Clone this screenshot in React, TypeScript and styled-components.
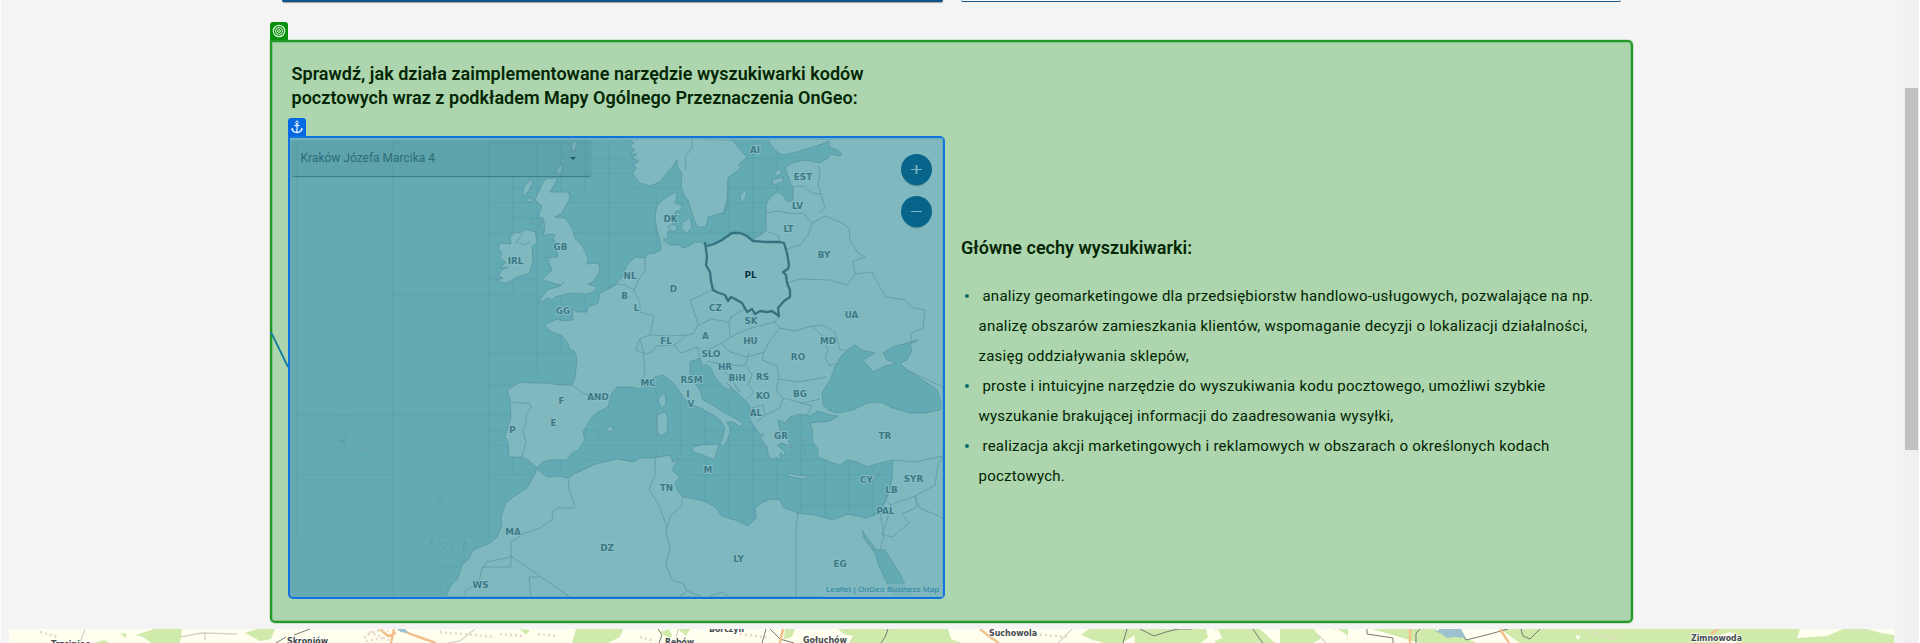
import React from 'react';
import styled, { createGlobalStyle } from 'styled-components';

const GlobalStyle = createGlobalStyle`
  * { box-sizing: border-box; }
  body { margin: 0; background: #f4f4f4; font-family: Roboto, "Liberation Sans", sans-serif; overflow: hidden; }
`;

const Page = styled.div`
  display: flex;
  height: 643px;
  border-left: 1px solid #fff;
  border-right: 1px solid #fff;
`;

const Content = styled.main`
  flex: 1;
  display: flex;
  flex-direction: column;
  min-width: 0;
`;

const ScrollTrack = styled.div`
  width: 16px;
  padding: 88px 1px 0 2px;
  background: #f0f0f0;
`;

const ScrollThumb = styled.div`
  height: 362px;
  background: #c1c1c1;
`;

const ButtonEdges = styled.div`
  display: flex;
  gap: 18px;
  padding-left: 281px;
  height: 40px;
`;

const ButtonEdge = styled.div<{ $outlined?: boolean }>`
  width: ${p => (p.$outlined ? 660 : 661)}px;
  height: 2px;
  border-radius: 0 0 3px 3px;
  background: ${p => (p.$outlined ? '#f8fafb' : '#0f548b')};
  border-bottom: 1px solid #0f548b;
  box-shadow: ${p => (p.$outlined ? 'none' : '0 1px 1px rgba(0, 0, 0, 0.35)')};
`;

const Card = styled.section`
  position: relative;
  display: flex;
  gap: 16px;
  width: 1363px;
  height: 583px;
  margin-left: 269px;
  padding: 20px 16px 0;
  background: #add6ae;
  border: 2px solid #219a27;
  border-radius: 0 5px 5px 5px;
  box-shadow: 0 0 0 1px rgba(33, 154, 39, 0.18), inset 0 0 0 1px rgba(33, 130, 39, 0.25);
`;

const Badge = styled.div<{ $color: string }>`
  position: absolute;
  left: -2px;
  top: -20px;
  width: 18px;
  height: 18px;
  display: flex;
  align-items: center;
  justify-content: center;
  border-radius: 3px 3px 0 0;
  background: ${p => p.$color};
`;

const Connector = styled.svg`
  position: absolute;
  left: -2px;
  top: 290px;
`;

const DemoColumn = styled.div`
  width: 657px;
`;

const Heading = styled.h3`
  margin: 0;
  font-size: 18px;
  line-height: 24px;
  font-weight: 600;
  letter-spacing: 0.02px;
  color: #042604;
`;

const DemoHeading = styled(Heading)`
  padding-left: 3.5px;
  height: 74px;
  white-space: nowrap;
`;

const MapFrame = styled.div`
  position: relative;
  height: 463px;
  border: 2px solid #1173e2;
  border-radius: 0 5px 5px 5px;
  background: #68a9b2;
`;

const MapCanvas = styled.svg`
  display: block;
`;

const SearchBox = styled.div`
  position: absolute;
  left: 2px;
  top: 2px;
  width: 299px;
  height: 36px;
  display: flex;
  align-items: center;
  justify-content: space-between;
  padding: 0 15px 0 8.5px;
  border-radius: 2px;
  background: rgba(70, 125, 140, 0.18);
  box-shadow: 0 1px 1px rgba(20, 80, 95, 0.5);
  font-size: 12px;
  color: #2c6c78;
`;

const Arrow = styled.div`
  width: 0;
  border: 3px solid transparent;
  border-top: 3px solid #1f5b68;
  margin-top: 3px;
`;

const ZoomControls = styled.div`
  position: absolute;
  right: 11px;
  top: 16px;
  display: flex;
  flex-direction: column;
  gap: 11px;
`;

const ZoomButton = styled.div`
  width: 31px;
  height: 31px;
  border-radius: 50%;
  background: #07648a;
  display: flex;
  align-items: center;
  justify-content: center;
  box-shadow: 0 3px 1px -2px rgba(20, 70, 90, 0.5);
`;

const Attribution = styled.div`
  position: absolute;
  right: 0;
  bottom: 0;
  height: 13px;
  padding: 0 4px 0 3px;
  line-height: 12px;
  background: rgba(127, 184, 190, 0.75);
  font-family: "Liberation Sans", sans-serif;
  font-size: 8px;
  letter-spacing: 0.15px;
  white-space: nowrap;
  color: #2681a3;
`;

const FeatureColumn = styled.div`
  padding: 174px 0 0;
`;

const FeatureList = styled.ul`
  list-style: none;
  margin: 21px 0 0;
  padding: 0 0 0 17.5px;
  font-size: 15px;
  font-weight: 400;
  line-height: 30px;
  letter-spacing: 0.24px;
  color: #022403;
  white-space: nowrap;
`;

const Feature = styled.li`
  position: relative;
  &::before {
    content: '';
    position: absolute;
    left: -14px;
    top: 13px;
    width: 4px;
    height: 4px;
    border-radius: 50%;
    background: #0b6e6a;
  }
`;

const StripMap = styled.svg`
  display: block;
  margin: 6px 0 0 8px;
`;

const LAND = '#7fb8be';
const SEA = '#63abb3';
const COAST = '#5a95a1';

const landPaths = [
  // Eurasia and Africa
  'M768 138L770 144 777 152 783 155 797 152 813 147 825 143 829 141 829 147 837 150 842 154 840 156 830 154 828 158 820 163 810 161 803 160 793 163 785 167 787 173 790 182 793 187 793 200 787 202 783 195 777 192 770 197 766 205 766 230 762 234 755 238 752 240 743 233 733 233 723 238 717 243 707 246 700 242 695 242 687 247 682 248 680 245 670 245 663 240 669 237 667 233 672 227 675 212 681 210 682 205 675 203 677 196 676 192 670 195 663 200 657 205 655 217 657 230 660 240 661 250 655 253 647 254 645 258 635 257 627 265 622 277 615 285 610 288 600 293 598 303 588 307 587 312 577 312 572 308 573 320 562 321 558 319 550 322 545 325 548 330 562 336 568 343 569 348 575 352 577 360 575 377 572 385 560 385 547 383 533 383 520 382 507 390 510 400 511 417 508 427 505 437 508 442 509 457 522 457 528 460 537 468 543 462 550 460 567 460 572 453 578 450 585 440 583 432 592 417 598 412 608 407 612 393 617 387 630 387 640 389 645 383 655 377 663 375 672 382 677 388 683 397 688 403 700 408 713 415 720 420 725 428 722 440 719 445 725 445 730 433 730 428 727 422 733 422 740 427 743 423 733 417 720 410 713 405 703 400 700 390 690 378 690 362 700 358 702 367 706 364 710 367 715 377 723 387 737 393 747 402 750 407 750 420 757 430 762 440 767 447 768 455 773 460 777 457 780 462 780 453 785 456 785 452 777 445 782 443 792 448 787 438 780 430 778 420 785 423 790 417 800 414 810 416 818 411 830 415 838 416 830 421 810 423 813 432 812 440 818 450 818 457 830 462 840 465 847 460 857 462 867 467 880 463 893 460 892 477 888 495 880 513 867 518 848 514 833 520 815 515 798 513 783 507 780 500 772 499 763 502 755 508 756 518 748 526 738 521 722 516 715 507 708 503 700 500 683 497 677 490 675 482 680 478 672 470 679 458 673 462 670 455 653 458 640 458 633 462 617 459 600 463 593 465 585 469 576 473 568 478 558 476 547 477 537 469 533 477 527 488 513 497 506 503 501 517 502 525 497 537 490 543 473 550 468 560 462 565 458 578 450 587 446 597H943V138Z',
  // Scandinavia
  'M628 138L634 143 629 146 635 150 630 154 637 154 632 158 639 161 633 165 637 168 632 173 640 183 650 186 660 182 672 167 677 160 678 168 682 173 681 187 685 197 688 200 692 213 697 227 706 227 708 217 723 213 727 200 728 178 742 167 738 165 747 157 738 147 732 140Z',
  // Great Britain
  'M543 182L547 178 558 178 553 187 550 192 568 192 570 197 568 202 562 213 555 217 565 218 572 228 575 238 583 247 588 258 587 264 598 263 600 269 598 275 593 282 588 284 597 287 594 292 585 294 570 293 555 297 552 300 547 298 543 301 538 303 547 290 560 286 564 282 561 285 553 283 542 280 552 270 547 258 558 257 556 250 557 243 553 240 555 235 549 234 543 236 545 227 543 218 538 217 542 206 535 200 538 193Z',
  // Ireland
  'M510 238L515 232 520 233 525 229 535 232 537 242 532 247 533 260 530 272 524 275 517 277 507 283 502 283 497 280 503 278 498 276 502 270 508 267 500 268 506 262 500 258 502 253 498 248 500 243 511 244Z',
  'M530 180L524 187 522 197 528 192 533 182ZM529 197L527 202 533 201ZM572 143L577 141 575 152 571 149ZM558 166L563 165 561 173 556 174ZM532 221L529 223 533 224ZM540 221L538 227 542 222ZM545 257L550 258 548 261Z',
  'M692 447L700 445 719 444 714 460 703 455 693 452ZM657 415L665 412 668 418 667 433 660 436 657 430ZM665 393L666 403 662 409 658 400 660 396ZM606 429L610 426 614 429 610 432Z',
  'M787 473L795 475 808 476 807 479 796 478 788 476ZM866 481L872 477 879 473 873 480 868 484ZM668 226L675 224 678 229 672 232ZM682 223L690 217 692 227 687 233 682 229ZM710 231L714 230 713 233Z',
  'M747 189L740 195 741 204 746 197ZM729 198L727 206 723 215 725 214 730 200ZM773 173L780 169 782 173 777 176ZM772 180L783 177 783 182 773 185Z',
  'M442 544L446 542 444 548ZM450 548L453 546 453 550ZM465 542L466 546 463 549ZM431 541L433 540 432 544ZM437 501L442 500 441 503ZM339 441L347 440 345 442ZM364 448H370V450H364ZM596 435L599 434 598 438Z',
];

const seaPaths = [
  'M823 405L822 393 830 380 835 367 840 358 847 350 855 345 862 350 875 353 863 360 873 372 883 367 897 363 887 360 883 353 893 347 907 343 918 340 910 344 912 350 907 360 900 363 907 370 923 380 937 390 941 403 940 410 925 413 910 413 893 408 880 402 867 403 853 410 838 413 830 411Z',
  'M862 530L867 538 877 550 885 550 893 563 899 572 905 585 913 597H896L888 585 879 566 875 553 864 538Z',
];

const borderPath =
  'M692 140V148L685 157 686 170M793 187L803 186 811 193 821 194M818 165L820 174 818 184 821 194 825 208 819 213M766 213L778 211 793 214 803 213 812 223 808 235 800 245 787 249M812 223L825 216 840 222 849 228 850 240 858 253 865 257 853 261 855 274 847 285 830 280 800 279 787 283M855 274L872 272 877 282 886 297 905 300 913 308 925 310 923 328 912 333 911 341M757 242L753 238M780 242L778 235 766 231' +
  'M607 288L616 284 625 285 634 290 640 303 640 312 654 316 650 335 640 338 636 350 645 354 653 351 656 346 674 345 688 335 694 333 698 325 696 318 690 300 713 290M645 258L645 271 639 279 634 290M650 335L668 336 688 335M640 338L643 350 645 370 643 383 647 387M674 345L681 353 697 347 703 352 720 344 730 338 729 322 712 319 698 325M742 303L746 308 731 317 729 322M730 338L736 334 751 328 775 322 780 328 770 340 764 352 747 357 730 352 722 344M780 316L775 322M780 328L795 331 812 326 823 325 835 332 840 350 844 350M812 326L822 335 828 350 825 358 830 366 837 363M764 352L762 360 777 366 779 379 798 382 827 377M697 347L700 359M707 361L720 364 745 366 749 353M720 368L728 374 737 388M747 367L752 375 748 385 754 392 747 399M779 379L776 390 783 398 780 408 765 415 757 422M783 398L802 403 820 399M765 415L763 405 752 408M800 403L812 406 807 415' +
  'M572 385L585 394 600 397 612 398M510 402L520 403 529 403 531 407 526 414 526 424 523 431 526 442 522 457M517 242L525 229M515 242L525 245 530 242' +
  'M568 478L569 490 575 507 573 508 558 508 552 512 553 519 540 528 525 533 511 542V567H482L479 583 466 590 465 597M511 556L570 597M540 577H529L531 597M511 557L487 562 483 568M655 458L655 475 649 490 658 503 667 527 666 530 670 548 666 566 673 581 683 583 687 591 679 597M667 527L671 515 682 505V497M687 591L701 596M710 596L722 592 730 597M798 513L796 528V597M880 513L884 535 880 550M888 517L882 535 893 537 903 528 909 523 902 514 917 507 915 496M892 477L890 489 885 499 890 505 915 496 935 485 938 465 943 456M893 460L915 462 943 456M915 496L920 508 943 518M890 505L888 517M907 370L943 387';

const gridPath =
  'M297 143V536M393 140V597M344 415V475M297 415H540M297 475H393M291 536H500M393 294H537M489 143V536M489 203H943M489 233H943M489 264H537M489 279H537M489 354H575M489 143H600M513 172V294M537 143V373M561 143V190M561 294V354M585 140V190M585 294V312M561 158H630M513 188H540M513 218H560M561 173H640M489 385H512M489 430H520M489 445H520M489 475H537M513 430V475M440 536V597M440 566H470M464 536V566M585 430H600M585 445H940M585 460H700M561 460V475M609 140V290M632 140V460M656 160V460M681 360V460M705 400V500M729 400V520M753 420V520M777 440V505M801 410V513M825 455V520M849 455V520M873 460V515M753 460H880M683 475H890M801 506H885M729 140V240M753 140V240M777 140V200M729 158H800M729 188H790M632 188H690M632 173H640M681 385H740M705 430H760M849 345V412M825 385H943M873 370V405M873 566H900M897 550V580';

const labels: [string, number, number][] = [
  ['AI', 755, 153], ['EST', 803, 179.5], ['LV', 797.5, 208.5], ['LT', 788.5, 232], ['DK', 670.5, 222], ['BY', 824, 258],
  ['GB', 560.5, 250], ['IRL', 515.5, 263.5], ['GG', 563, 314], ['NL', 630, 278.5], ['B', 624.5, 298.5], ['L', 636.5, 310.5],
  ['D', 673.5, 292], ['CZ', 715.5, 311], ['SK', 751, 324], ['UA', 851.5, 318], ['A', 705.5, 338.5], ['FL', 666, 344],
  ['HU', 750.5, 343.5], ['MD', 828, 343.5], ['RO', 798, 360], ['SLO', 711, 357], ['HR', 725, 369.5], ['BiH', 737, 380.5],
  ['RS', 762.5, 380], ['BG', 800, 397], ['KO', 763, 399], ['RSM', 691.5, 383], ['MC', 648, 385.5], ['I', 688, 396.5],
  ['V', 691, 407], ['AND', 598, 399.5], ['F', 561.5, 403.5], ['E', 553.5, 425.5], ['P', 512.5, 432.5], ['AL', 756, 415.5],
  ['GR', 781, 438.5], ['TR', 885, 438.5], ['M', 708, 472.5], ['TN', 666.5, 491], ['CY', 866.5, 483], ['SYR', 913.5, 482],
  ['LB', 891.5, 493], ['PAL', 885.5, 513.5], ['MA', 513, 534.5], ['DZ', 607, 550.5], ['LY', 738.5, 561.5], ['EG', 840, 567],
  ['WS', 480.5, 588],
];

const polandPath =
  'M705 242L707 257 706 265 710 272 711 281 713 290 719 293 725 295 728 301 731 297 735 299 742 303 747 312 752 309 755 314 760 311 767 312 772 311 779 316 778 308 784 301 790 297 790 290 787 283 786 275 783 272 788 269 789 265 787 253 784 243 780 242 765 242 753 241 747 236 740 233 732 233 722 240 714 244 707 246';

const aegean = [[790, 422], [798, 424], [802, 430], [796, 437], [800, 445], [795, 452], [803, 451], [791, 457], [808, 455], [811, 460], [799, 461], [805, 439], [762, 435], [764, 446], [820, 468], [788, 446]];

const EuropeMap = () => (
  <MapCanvas width="653" height="459" viewBox="290 138 653 459">
    <rect x="291.5" y="140" width="652" height="456" fill={SEA} />
    <path d={gridPath} fill="none" stroke="#579daa" strokeWidth="0.7" opacity="0.75" />
    <g fill={LAND} stroke={COAST} strokeWidth="0.8" strokeLinejoin="round">
      {landPaths.map(d => <path key={d} d={d} />)}
      <g fill={SEA}>{seaPaths.map(d => <path key={d} d={d} />)}</g>
      {aegean.map(([x, y]) => <ellipse key={`${x}-${y}`} cx={x} cy={y} rx="2" ry="1.2" />)}
    </g>
    <path d={borderPath} fill="none" stroke={COAST} strokeWidth="0.7" strokeLinejoin="round" />
    <path d="M730 388l8 5M735 386l5 6M727 383l6 6" stroke={COAST} />
    <path d={polandPath} fill="none" stroke="#34727f" strokeWidth="2.3" strokeLinejoin="round" />
    <rect x="290" y="138" width="653" height="2" fill="#74b0b8" />
    <g fontFamily="'DejaVu Sans', sans-serif" fontSize="8.8" fontWeight="700" textAnchor="middle"
      stroke="#8abec5" strokeWidth="1.8" strokeLinejoin="round" paintOrder="stroke" fill="#3b7986">
      {labels.map(([name, x, y]) => <text key={name} x={x} y={y}>{name}</text>)}
      <text x="750.5" y="278" fill="#05333e">PL</text>
    </g>
  </MapCanvas>
);

const towns: [string, number, number, number][] = [
  ['Trzciniec', 51, 18, 39], ['Skroniów', 287, 14.5, 41], ['Borczyń', 709, 3, 35], ['Rębów', 665, 15.5, 29],
  ['Gołuchów', 803, 14, 44], ['Suchowola', 989, 7, 48], ['Zimnowoda', 1691, 12, 51],
];

const TerrainStrip = () => (
  <StripMap width="1885" height="14" viewBox="9 0 1885 14">
    <rect x="9" width="1885" height="14" fill="#fffeef" />
    <g fill="#d0eaab">
      <path d="M120 4l7 1-2 4zM136 6l18-6h28l-2 14h-29l-8-6zM245 4l12-4h18l-4 10-11 2zM94 14l10-3 6 3zM520 0l10 1-4 5zM576 0h47l-3 8-12 6h-36zM660 3l9-3 3 6-2 4zM678 0h12l-4 7zM785 0h10l-3 8-8 2zM838 0h110l3 10 11 4H849l4-7-9-2zM1081 6l8-6h50l-7 8-10 6h-17l-12-3zM1134 0h72l2 8-7 6h-66z" />
      <path d="M1215 0h45l15 14h-60zM1280 0h34l7 10-8 4h-33zM1334 0h14v10l-8 4-4-6zM1372 0h63l30 9 12 5H1420zM1500 0h300l-3 9 30-2 16-7h24l14 4 13 2v8H1520z" />
    </g>
    <g fill="#fffeef">
      <path d="M1320 4l18-4 10 7-3 7h-25zM1210 4l8-4 4 9-6 3zM1720 6l10-3 9 4-3 7h-16zM1448 4l14-4h12l-12 8zM1575 6l6 1-3 4z" />
    </g>
    <g fill="none" stroke="#d6d5c8" strokeWidth="1.3">
      <path d="M85 0l-5 14M180 8l22-4 35 1M205 3v8M475 0l-15 12-12 2M1072 0l-14 14M1318 6l8 8M678 0l-2 9" />
    </g>
    <g fill="none" stroke="#777a70" strokeWidth="1">
      <path d="M276 14l10-6M294 6l16-6M658 0l4 6-3 8M766 0l-4 14M770 0l10 10 14 4M888 0l-3 8-4 6M1127 0l-4 14M1140 0l14 7 12-4 12-3 14 0M1253 0l6 9 4 5M1367 0v5l26 4v5M1420 0l-4 4v10M1459 0l7 11 24-6 18-5M1521 0l2 7 7 3 10-10" />
    </g>
    <g fill="none" stroke="#f3c08c" strokeWidth="2.4">
      <path d="M398 0l18 7 20 7M394 0l-3 14M380 0l8 7 8-3M783 0l-3 14M980 0l10 8 9 6M1410 0v14M1500 0l9 14M1718 0l-7 5" />
    </g>
    <path d="M397 0h8l4 4-8-1zM1434 2h5V0h22l5 9-12-1-7 1-7-5z" fill="#9dc1cf" />
    <g fill="none" stroke="#e6d8ca" strokeWidth="2.5" strokeDasharray="2 3">
      <path d="M364 9q8-9 24-7M369 3l20 8M366 12l18-3M440 3l55 5M500 5l22 2M40 3l18 5M538 5l20 2M1850 2l20-1M1590 3l30 8M1030 5l40 3M740 5l30 4M640 8l14 4" />
    </g>
    <g fontFamily="'DejaVu Sans Condensed', 'DejaVu Sans', sans-serif" fontSize="9" fontWeight="700"
      fill="#444a50" stroke="#fffef5" strokeWidth="1.6" paintOrder="stroke">
      {towns.map(([name, x, y, w]) => <text key={name} x={x} y={y} textLength={w} lengthAdjust="spacingAndGlyphs">{name}</text>)}
    </g>
  </StripMap>
);

const TargetIcon = () => (
  <svg width="14" height="14" viewBox="0 0 14 14" fill="none" stroke="#d9f2d9">
    <circle cx="7" cy="7" r="5.7" strokeWidth="1.2" />
    <circle cx="7" cy="7" r="3.5" strokeWidth="1" />
    <circle cx="7" cy="7" r="1.4" strokeWidth="1" />
  </svg>
);

const AnchorIcon = () => (
  <svg width="14" height="14" viewBox="0 0 14 14" fill="none" stroke="#e3efff" strokeWidth="1.3">
    <circle cx="7" cy="2.4" r="1.3" strokeWidth="1" />
    <path d="M7 3.7V12.4M4.5 5.5h5M2 8.7c.3 2.4 2.3 3.7 5 3.8 2.7-.1 4.7-1.4 5-3.8" />
    <path d="M1.3 10.3l.5-2.5 2 1.5zM12.7 10.3l-.5-2.5-2 1.5z" fill="#e3efff" stroke="none" />
  </svg>
);

export default function App() {
  return (
    <>
      <GlobalStyle />
      <Page>
        <Content>
          <ButtonEdges>
            <ButtonEdge />
            <ButtonEdge $outlined />
          </ButtonEdges>
          <Card>
            <Badge $color="#07900d"><TargetIcon /></Badge>
            <DemoColumn>
              <DemoHeading>
                Sprawdź, jak działa zaimplementowane narzędzie wyszukiwarki kodów<br />
                pocztowych wraz z podkładem Mapy Ogólnego Przeznaczenia OnGeo:
              </DemoHeading>
              <MapFrame>
                <Badge $color="#0569e3"><AnchorIcon /></Badge>
                <EuropeMap />
                <SearchBox>
                  <span>Kraków Józefa Marcika 4</span>
                  <Arrow />
                </SearchBox>
                <ZoomControls>
                  <ZoomButton>
                    <svg width="11" height="11" viewBox="0 0 11 11" stroke="#7db5c2"><path d="M0 5.5h11" /><path d="M5.5 1v9" strokeWidth="1.8" /></svg>
                  </ZoomButton>
                  <ZoomButton>
                    <svg width="11" height="11" viewBox="0 0 11 11" stroke="#7db5c2"><path d="M0 5.5h11" /></svg>
                  </ZoomButton>
                </ZoomControls>
                <Attribution>Leaflet | OnGeo Business Map</Attribution>
              </MapFrame>
            </DemoColumn>
            <FeatureColumn>
              <Heading>Główne cechy wyszukiwarki:</Heading>
              <FeatureList>
                <Feature>
                  &nbsp;analizy geomarketingowe dla przedsiębiorstw handlowo-usługowych, pozwalające na np.<br />
                  analizę obszarów zamieszkania klientów, wspomaganie decyzji o lokalizacji działalności,<br />
                  zasięg oddziaływania sklepów,
                </Feature>
                <Feature>
                  &nbsp;proste i intuicyjne narzędzie do wyszukiwania kodu pocztowego, umożliwi szybkie<br />
                  wyszukanie brakującej informacji do zaadresowania wysyłki,
                </Feature>
                <Feature>
                  &nbsp;realizacja akcji marketingowych i reklamowych w obszarach o określonych kodach<br />
                  pocztowych.
                </Feature>
              </FeatureList>
            </FeatureColumn>
            <Connector width="20" height="40" viewBox="0 0 20 40">
              <path d="M0 0.5L2 2 18 35" fill="none" stroke="#117c9c" strokeWidth="1.8" />
            </Connector>
          </Card>
          <TerrainStrip />
        </Content>
        <ScrollTrack><ScrollThumb /></ScrollTrack>
      </Page>
    </>
  );
}
